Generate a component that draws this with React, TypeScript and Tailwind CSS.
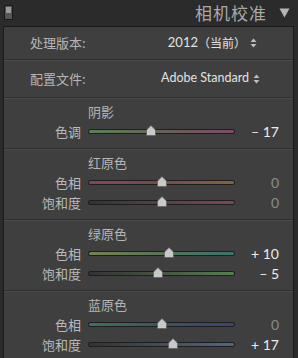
import React from "react";

type SliderRow = {
  label: string;
  value: number;
  gradient: string;
  thumb: number;
};

type Group = {
  title: string;
  rows: SliderRow[];
};

const groups: Group[] = [
  {
    title: "阴影",
    rows: [{ label: "色调", value: -17, gradient: "linear-gradient(90deg,#5a8050,#646458 50%,#804a68)", thumb: 63 }],
  },
  {
    title: "红原色",
    rows: [
      { label: "色相", value: 0, gradient: "linear-gradient(90deg,#80465c,#724c4c 50%,#80643f)", thumb: 74 },
      { label: "饱和度", value: 0, gradient: "linear-gradient(90deg,#333333,#554242 50%,#804650)", thumb: 74 },
    ],
  },
  {
    title: "绿原色",
    rows: [
      { label: "色相", value: 10, gradient: "linear-gradient(90deg,#74824e,#567456 50%,#3a726c)", thumb: 81 },
      { label: "饱和度", value: -5, gradient: "linear-gradient(90deg,#333333,#465442 50%,#54804e)", thumb: 70 },
    ],
  },
  {
    title: "蓝原色",
    rows: [
      { label: "色相", value: 0, gradient: "linear-gradient(90deg,#3a7262,#3a5460 50%,#3c4272)", thumb: 74 },
      { label: "饱和度", value: 17, gradient: "linear-gradient(90deg,#333333,#424e5c 50%,#4a6884)", thumb: 85 },
    ],
  },
];

const formatValue = (v: number) => {
  if (v > 0) return `+ ${v}`;
  if (v < 0) return `– ${Math.abs(v)}`;
  return "0";
};

const UpDown = () => (
  <svg width="7" height="10" viewBox="0 0 7 10" className="ml-[4px]">
    <path d="M3.5 0.5 L6.5 4 L0.5 4 Z" fill="#bdbdbd" />
    <path d="M3.5 9.5 L6.5 6 L0.5 6 Z" fill="#bdbdbd" />
  </svg>
);

const Separator = () => (
  <div className="flex flex-col">
    <div className="h-px bg-[#2f2f2f]" />
    <div className="h-px bg-[#4a4a4a]" />
  </div>
);

const Thumb = ({ left }: { left: number }) => (
  <svg
    width="10"
    height="11"
    viewBox="0 0 10 11"
    className="absolute top-[-4px]"
    style={{ left: left - 5 }}
  >
    <path d="M5 0.5 L9.5 5 L9.5 10.5 L0.5 10.5 L0.5 5 Z" fill="#c9c9c9" stroke="#555" strokeWidth="0.6" />
  </svg>
);

const Slider = ({ row }: { row: SliderRow }) => (
  <div className="flex items-center h-[20px]">
    <div className="w-[77px] text-right text-[13px] text-[#b9b9b9] leading-none">{row.label}</div>
    <div className="relative ml-[7px] w-[147px] h-[5px] rounded-full bg-[#1e1e1e] p-px">
      <div className="h-full rounded-full" style={{ background: row.gradient }} />
      <Thumb left={row.thumb} />
    </div>
    <div
      className={`w-[44px] text-right text-[14px] leading-none font-['Lato','Liberation_Sans',sans-serif] ${
        row.value === 0 ? "text-[#8c8c8c]" : "text-[#ececec]"
      }`}
    >
      {formatValue(row.value)}
    </div>
  </div>
);

export default function App() {
  return (
    <div className="w-[298px] h-[358px] overflow-hidden bg-[#2b2b2b] flex flex-col font-['Noto_Sans_CJK_SC',sans-serif]">
      <div className="h-[26px] flex items-center justify-between pl-[4px] pr-[8px]">
        <div className="w-[9px] h-[15px] border border-[#1a1a1a] bg-[#555] flex flex-col p-px">
          <div className="h-[6px] bg-[#9a9a9a]" />
        </div>
        <div className="flex items-center">
          <span className="text-[17px] text-[#a9a9a9] tracking-[1px]">相机校准</span>
          <svg width="11" height="10" viewBox="0 0 11 10" className="ml-[12px]">
            <path d="M0.5 0.5 L10.5 0.5 L5.5 9.5 Z" fill="#b4b4b4" />
          </svg>
        </div>
      </div>
      <div className="flex-1 mx-[3px] mr-[4px] bg-[#3f3f3f] border-t border-l border-r border-[#1a1a1a] flex flex-col">
        <div className="h-[32px] flex items-center pl-[26px] pr-[36px] justify-between">
          <span className="text-[13px] text-[#b5b5b5]">处理版本:</span>
          <span className="flex items-center text-[12px] text-[#e2e2e2]">
            <span className="font-['Lato','Liberation_Sans',sans-serif] text-[13px]">2012</span>
            <span>（当前）</span>
            <UpDown />
          </span>
        </div>
        <Separator />
        <div className="h-[36px] flex items-center pl-[26px] pr-[33px] justify-between">
          <span className="text-[13px] text-[#b5b5b5]">配置文件:</span>
          <span className="flex items-center text-[12.5px] text-[#e2e2e2] font-['Lato','Liberation_Sans',sans-serif]">
            Adobe Standard
            <UpDown />
          </span>
        </div>
        <Separator />
        {groups.map((g, i) => (
          <div key={g.title}>
            <div className="pt-[3px] pb-[6px]">
              <div className="h-[20px] flex items-center pl-[84px] text-[13px] text-[#b5b5b5]">{g.title}</div>
              {g.rows.map((r) => (
                <Slider key={g.title + r.label} row={r} />
              ))}
            </div>
            {i < groups.length - 1 && <Separator />}
          </div>
        ))}
      </div>
    </div>
  );
}
